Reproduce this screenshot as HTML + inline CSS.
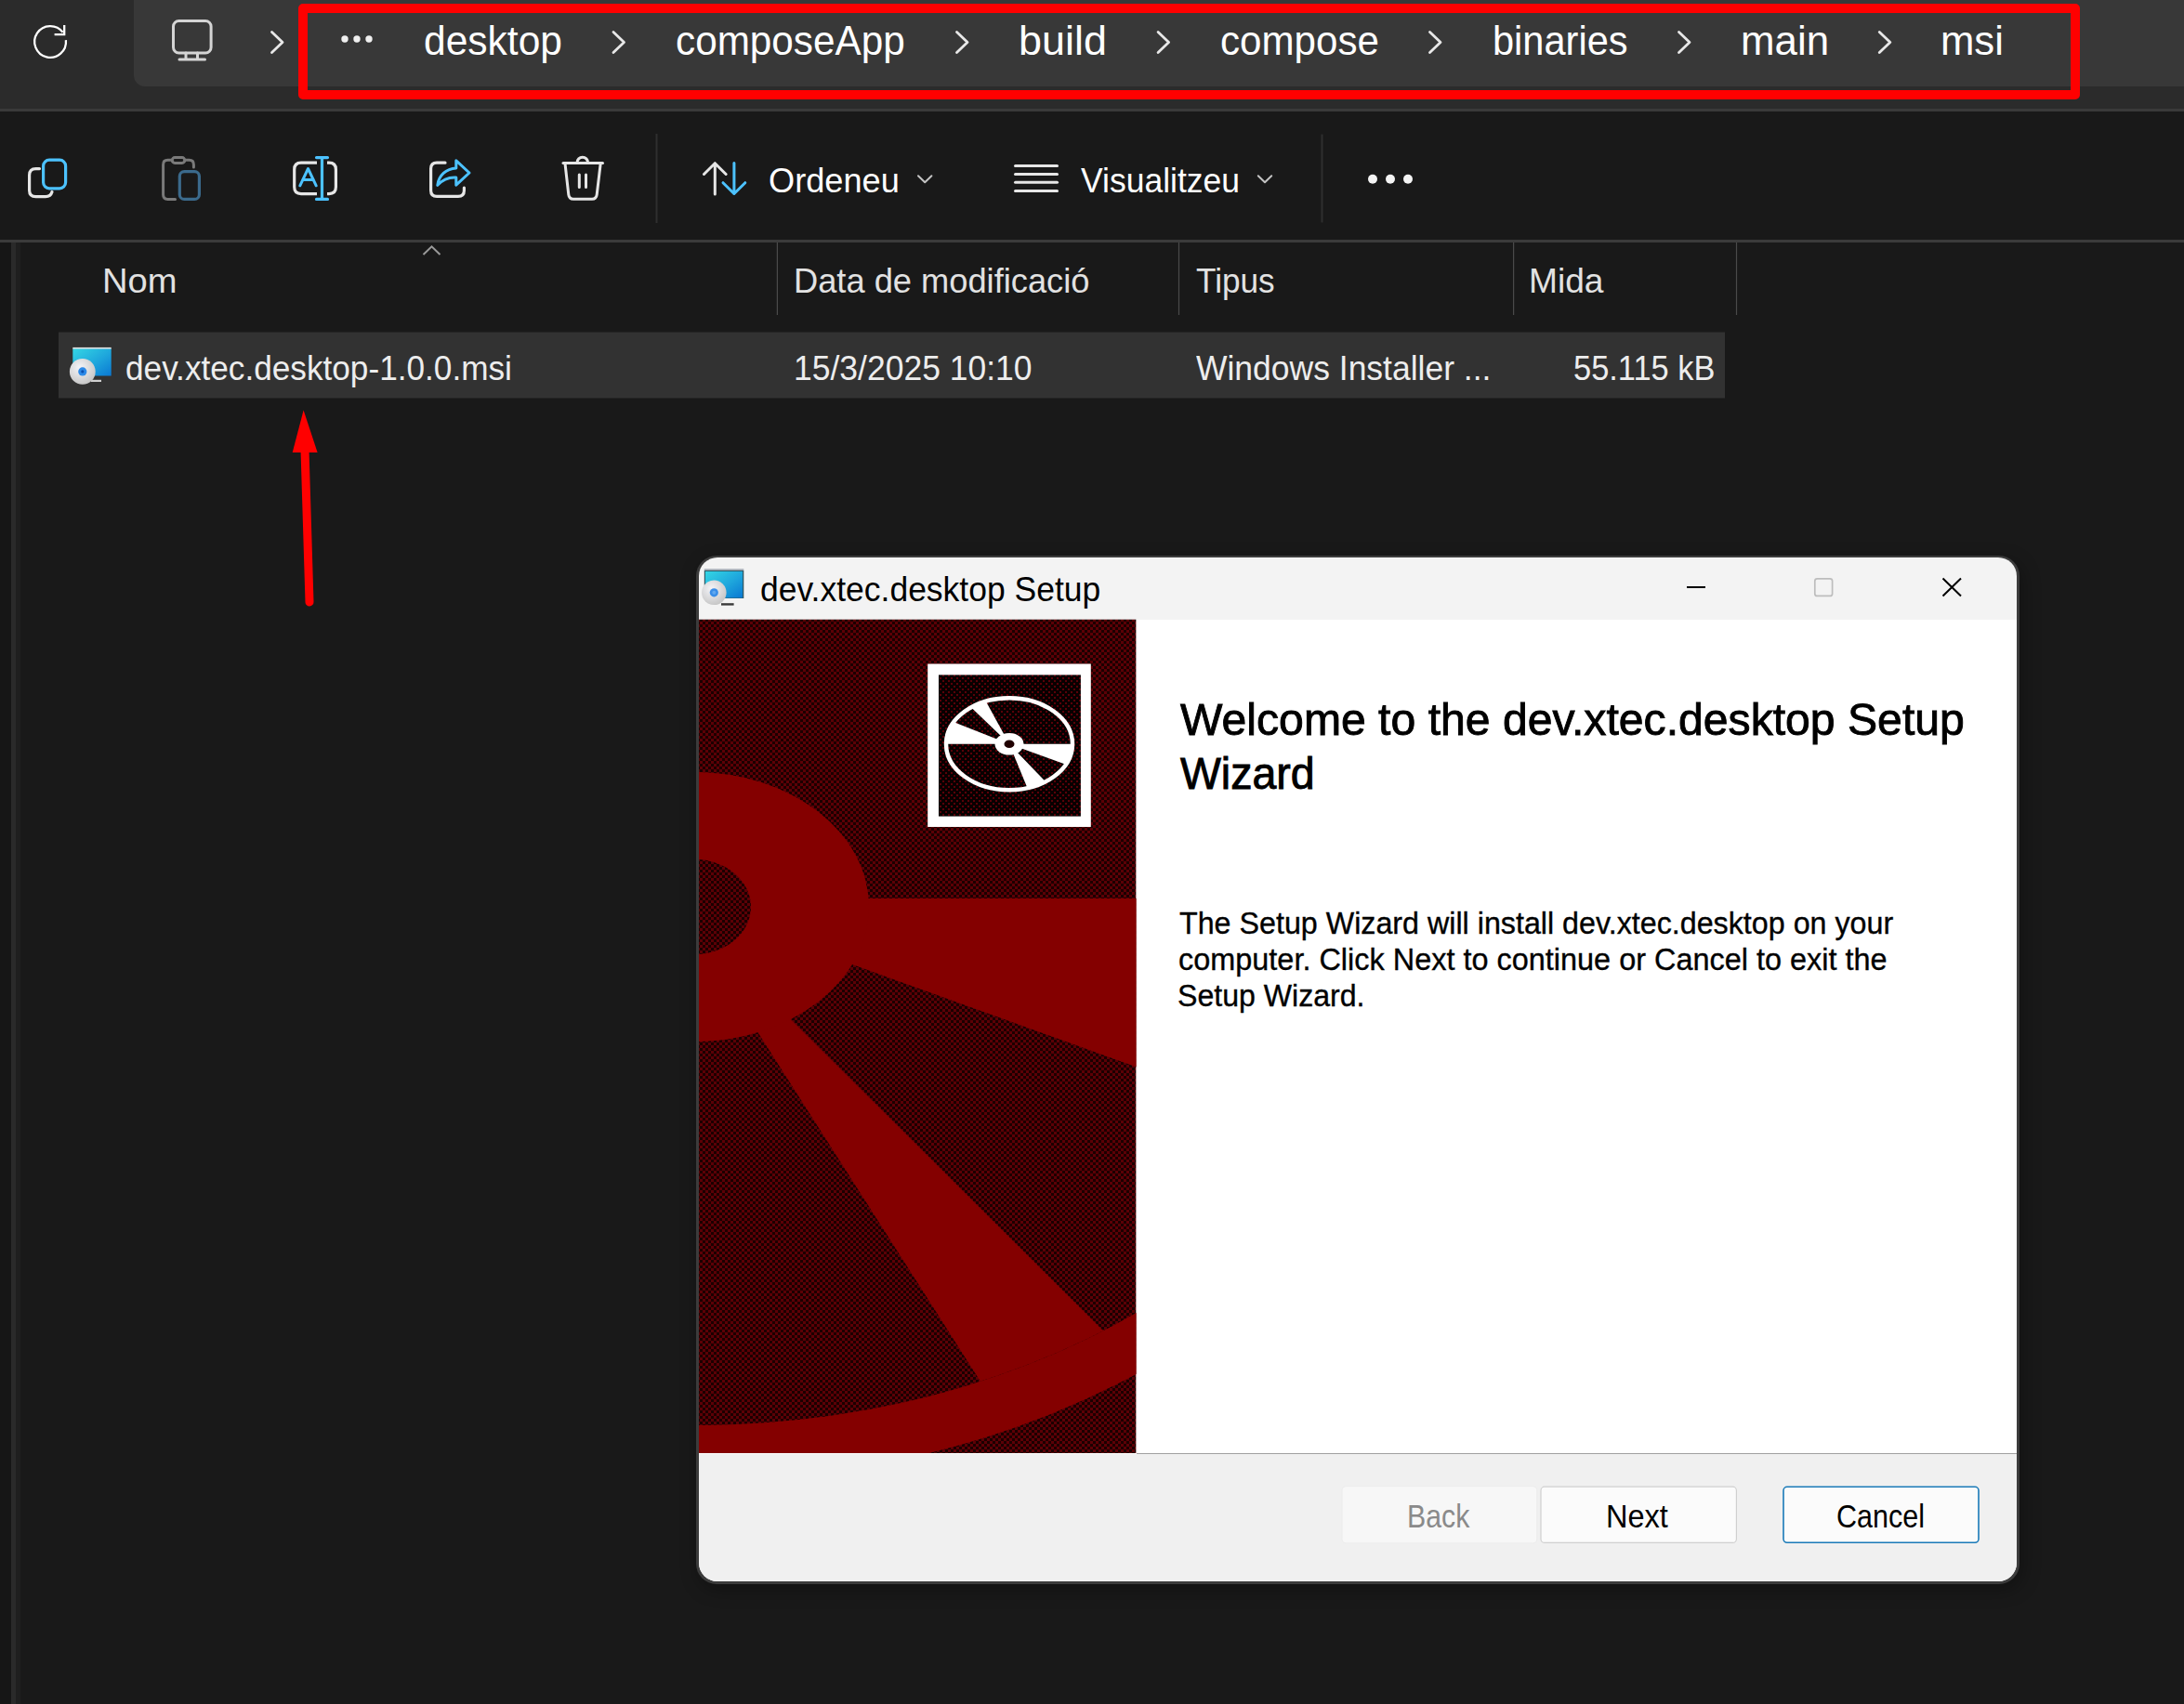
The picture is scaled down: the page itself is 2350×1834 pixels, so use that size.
<!DOCTYPE html>
<html><head><meta charset="utf-8"><style>
html,body{margin:0;padding:0}
body{width:2350px;height:1834px;position:relative;overflow:hidden;background:#191919;font-family:"Liberation Sans",sans-serif}
.t{position:absolute;white-space:pre;line-height:1;transform-origin:0 0}
</style></head><body>
<div style="position:absolute;left:0;top:0;width:2350px;height:117px;background:#2b2b2b"></div>
<div style="position:absolute;left:0;top:117px;width:2350px;height:3px;background:#3a3a3a"></div>
<div style="position:absolute;left:144px;top:-20px;width:2240px;height:112.5px;background:#383838;border-radius:12px"></div>
<div style="position:absolute;left:0;top:258px;width:2350px;height:3px;background:#3b3b3b"></div>
<div style="position:absolute;left:0;top:261px;width:12px;height:1573px;background:#161616"></div>
<div style="position:absolute;left:12px;top:261px;width:5px;height:1573px;background:#2a2a2a"></div>
<div style="position:absolute;left:17px;top:261px;width:5px;height:1573px;background:#1f1f1f"></div>
<div class="t" style="left:455.96px;top:22.78px;font-size:43.5px;color:#ffffff;transform:scaleX(0.9780);">desktop</div>

<div class="t" style="left:727.26px;top:22.78px;font-size:43.5px;color:#ffffff;transform:scaleX(0.9715);">composeApp</div>

<div class="t" style="left:1095.95px;top:22.78px;font-size:43.5px;color:#ffffff;transform:scaleX(1.0333);">build</div>

<div class="t" style="left:1312.76px;top:22.78px;font-size:43.5px;color:#ffffff;transform:scaleX(0.9682);">compose</div>

<div class="t" style="left:1605.65px;top:22.78px;font-size:43.5px;color:#ffffff;transform:scaleX(0.9554);">binaries</div>

<div class="t" style="left:1872.95px;top:22.78px;font-size:43.5px;color:#ffffff;transform:scaleX(1.0079);">main</div>

<div class="t" style="left:2087.95px;top:22.78px;font-size:43.5px;color:#ffffff;transform:scaleX(1.0037);">msi</div>

<svg width="2350" height="1834" style="position:absolute;left:0;top:0"><path d="M70.9,43.2 A16.9,16.9 0 1 1 67.6,34.8" fill="none" stroke="#fff" stroke-width="2.3"/>
<path d="M58.6,37.2 H69.2 V27" fill="none" stroke="#fff" stroke-width="2.3" stroke-linejoin="miter"/>
<rect x="186.5" y="22.5" width="40.6" height="34.5" rx="6" fill="none" stroke="#d4d4d4" stroke-width="3"/>
<path d="M200,57 V63.5 M212.5,57 V63.5 M193,64 H220.5" fill="none" stroke="#d4d4d4" stroke-width="3" stroke-linecap="round"/>
<path d="M292.5,34.5 L304,45.5 L292.5,56.5" fill="none" stroke="#e8e8e8" stroke-width="2.8" stroke-linecap="round" stroke-linejoin="round"/>
<path d="M660.0,34.5 L671.5,45.5 L660.0,56.5" fill="none" stroke="#e8e8e8" stroke-width="2.8" stroke-linecap="round" stroke-linejoin="round"/>
<path d="M1029.5,34.5 L1041,45.5 L1029.5,56.5" fill="none" stroke="#e8e8e8" stroke-width="2.8" stroke-linecap="round" stroke-linejoin="round"/>
<path d="M1246.1,34.5 L1257.6,45.5 L1246.1,56.5" fill="none" stroke="#e8e8e8" stroke-width="2.8" stroke-linecap="round" stroke-linejoin="round"/>
<path d="M1538.5,34.5 L1550,45.5 L1538.5,56.5" fill="none" stroke="#e8e8e8" stroke-width="2.8" stroke-linecap="round" stroke-linejoin="round"/>
<path d="M1806.5,34.5 L1818,45.5 L1806.5,56.5" fill="none" stroke="#e8e8e8" stroke-width="2.8" stroke-linecap="round" stroke-linejoin="round"/>
<path d="M2022.3,34.5 L2033.8,45.5 L2022.3,56.5" fill="none" stroke="#e8e8e8" stroke-width="2.8" stroke-linecap="round" stroke-linejoin="round"/>
<circle cx="371" cy="42" r="3.7" fill="#f0f0f0"/>
<circle cx="384" cy="42" r="3.7" fill="#f0f0f0"/>
<circle cx="397" cy="42" r="3.7" fill="#f0f0f0"/>
<rect x="326" y="9" width="1907" height="93" fill="none" stroke="#ff0000" stroke-width="10" stroke-linejoin="round"/>
<rect x="46.6" y="172.2" width="24" height="30.6" rx="6.5" fill="none" stroke="#4cc2ff" stroke-width="3.2"/>
<path d="M42.5,181.6 H38.5 Q31.6,181.6 31.6,188.5 V205 Q31.6,211.6 38.5,211.6 H49 Q54.5,211.6 56,206.5" fill="none" stroke="#e6e6e6" stroke-width="3.2" stroke-linecap="round"/>
<path d="M185,172.3 H180.5 Q175.6,172.3 175.6,177.2 V209.5 Q175.6,214.4 180.5,214.4 H188.5 M199,172.3 H203.5 Q208.4,172.3 208.4,177.2 V180" fill="none" stroke="#7a7a7a" stroke-width="3" stroke-linecap="round"/>
<rect x="185.2" y="169.6" width="13.6" height="5.8" rx="2.9" fill="none" stroke="#7a7a7a" stroke-width="3"/>
<rect x="193.3" y="184.6" width="21.1" height="29.8" rx="5" fill="none" stroke="#3b6a8c" stroke-width="3.2"/>
<path d="M341,175.2 H324 Q316.7,175.2 316.7,182.5 V201.3 Q316.7,208.6 324,208.6 H341 M352,175.2 H354 Q361.4,175.2 361.4,182.5 V201.3 Q361.4,208.6 354,208.6 H352" fill="none" stroke="#e6e6e6" stroke-width="3.2"/>
<path d="M346.5,169.6 V214.4 M340.5,169.6 H352.5 M340.5,214.4 H352.5" fill="none" stroke="#4cc2ff" stroke-width="3.2" stroke-linecap="round"/>
<path d="M322.8,199.8 L331.5,181.5 L340.2,199.8 M325.6,193.6 H337.4" fill="none" stroke="#4cc2ff" stroke-width="3" stroke-linecap="round" stroke-linejoin="round"/>
<path d="M479,175.2 H470 Q463.6,175.2 463.6,181.6 V205 Q463.6,211.4 470,211.4 H493 Q499.4,211.4 499.4,205 V202" fill="none" stroke="#e6e6e6" stroke-width="3.2" stroke-linecap="round"/>
<path d="M470.8,199.3 C472,189 480,181.5 490.8,181 V172.8 L505,186 L490.8,199.2 V191 C482.5,190.5 476,193.5 470.8,199.3 Z" fill="none" stroke="#4cc2ff" stroke-width="3" stroke-linejoin="round"/>
<path d="M606,175.4 H648.5" fill="none" stroke="#e6e6e6" stroke-width="3" stroke-linecap="round"/>
<path d="M621,175 A5.8,5.8 0 0 1 632.6,175" fill="none" stroke="#e6e6e6" stroke-width="3"/>
<path d="M608,176 L611.8,209.5 Q612.4,214.3 617,214.3 H637 Q641.6,214.3 642.2,209.5 L646.2,176" fill="none" stroke="#e6e6e6" stroke-width="3" stroke-linejoin="round"/>
<path d="M623.3,188 V201.5 M630.5,188 V201.5" fill="none" stroke="#e6e6e6" stroke-width="3" stroke-linecap="round"/>
<rect x="705.5" y="144" width="2" height="96" fill="#2f2f2f"/>
<rect x="1421.5" y="144.5" width="2" height="95" fill="#2f2f2f"/>
<path d="M769.3,176 V209 M757.5,187.5 L769.3,175.7 L781.1,187.5" fill="none" stroke="#e6e6e6" stroke-width="3" stroke-linecap="round" stroke-linejoin="round"/>
<path d="M789.9,175.5 V208.5 M778,196.7 L789.9,208.5 L801.8,196.7" fill="none" stroke="#4cc2ff" stroke-width="3" stroke-linecap="round" stroke-linejoin="round"/>
<path d="M988,189.2 L995.2,196.2 L1002.4,189.2" fill="none" stroke="#c4c4c4" stroke-width="2" stroke-linecap="round" stroke-linejoin="round"/>
<path d="M1092.5,178.5 H1137.5" stroke="#e6e6e6" stroke-width="3" stroke-linecap="round"/>
<path d="M1092.5,187.4 H1137.5" stroke="#e6e6e6" stroke-width="3" stroke-linecap="round"/>
<path d="M1092.5,196.3 H1137.5" stroke="#e6e6e6" stroke-width="3" stroke-linecap="round"/>
<path d="M1092.5,205.5 H1137.5" stroke="#e6e6e6" stroke-width="3" stroke-linecap="round"/>
<path d="M1353.8,189.2 L1361,196.2 L1368.2,189.2" fill="none" stroke="#c4c4c4" stroke-width="2" stroke-linecap="round" stroke-linejoin="round"/>
<circle cx="1477" cy="192.7" r="5" fill="#f4f4f4"/>
<circle cx="1496" cy="192.7" r="5" fill="#f4f4f4"/>
<circle cx="1515" cy="192.7" r="5" fill="#f4f4f4"/>
<path d="M455.5,274 L464.5,265.3 L473.5,274" fill="none" stroke="#9a9a9a" stroke-width="2"/>
<rect x="835.8" y="261" width="1.2" height="78" fill="#4a4a4a"/>
<rect x="1267.9" y="261" width="1.2" height="78" fill="#4a4a4a"/>
<rect x="1628.0" y="261" width="1.2" height="78" fill="#4a4a4a"/>
<rect x="1867.9" y="261" width="1.2" height="78" fill="#4a4a4a"/>
<rect x="63" y="357.5" width="1793" height="71" fill="#323232"/>
<defs><linearGradient id="scr" x1="0" y1="0" x2="1" y2="1"><stop offset="0" stop-color="#34d6e4"/><stop offset="0.55" stop-color="#1ea6dc"/><stop offset="1" stop-color="#0a78d2"/></linearGradient>
<radialGradient id="cdg" cx="0.4" cy="0.35" r="0.7"><stop offset="0" stop-color="#f4f4f8"/><stop offset="1" stop-color="#c4c4c4"/></radialGradient></defs>
<g transform="translate(75,373) scale(1.0)"><rect x="3.3" y="0.9" width="41.4" height="2" fill="#e8e8e8"/><rect x="3.3" y="2.5" width="41.4" height="29" fill="url(#scr)"/><rect x="23" y="35.8" width="11" height="2.2" fill="#d0d0d0"/><circle cx="13.8" cy="26.9" r="13.9" fill="url(#cdg)"/><circle cx="13.8" cy="26.9" r="4.6" fill="#2c8ae8"/><circle cx="13.8" cy="26.9" r="1.6" fill="#0a50b0"/></g>
<path d="M314.7,487 L326.6,441.6 L341.6,487 Z" fill="#ff0000"/>
<path d="M328,484 L333,648" stroke="#ff0000" stroke-width="9" stroke-linecap="round"/></svg>
<div class="t" style="left:110.34px;top:284.11px;font-size:37px;color:#e2e2e2;transform:scaleX(1.0301);">Nom</div>

<div class="t" style="left:854.04px;top:283.61px;font-size:37px;color:#e2e2e2;transform:scaleX(0.9800);">Data de modificació</div>

<div class="t" style="left:1286.66px;top:283.61px;font-size:37px;color:#e2e2e2;transform:scaleX(0.9500);">Tipus</div>

<div class="t" style="left:1645.44px;top:283.61px;font-size:37px;color:#e2e2e2;transform:scaleX(1.0035);">Mida</div>

<div class="t" style="left:134.52px;top:377.91px;font-size:37px;color:#ededed;transform:scaleX(0.9509);">dev.xtec.desktop-1.0.0.msi</div>

<div class="t" style="left:854.04px;top:377.91px;font-size:37px;color:#ededed;transform:scaleX(0.9591);">15/3/2025 10:10</div>

<div class="t" style="left:1287.03px;top:377.91px;font-size:37px;color:#ededed;transform:scaleX(0.9589);">Windows Installer ...</div>

<div class="t" style="left:1692.92px;top:377.91px;font-size:37px;color:#ededed;transform:scaleX(0.9298);">55.115 kB</div>

<div class="t" style="left:827.17px;top:176.62px;font-size:36.5px;color:#ffffff;transform:scaleX(0.9912);">Ordeneu</div>

<div class="t" style="left:1162.63px;top:176.62px;font-size:36.5px;color:#ffffff;transform:scaleX(0.9728);">Visualitzeu</div>

<div style="position:absolute;left:749px;top:597.5px;width:1424px;height:1107.5px;border-radius:22px;background:#3c3c3c;box-shadow:3px 6px 20px rgba(0,0,0,0.3)"></div>
<div style="position:absolute;left:752px;top:600px;width:1418px;height:1102px;border-radius:20px;background:#f3f3f3;overflow:hidden">
<div style="position:absolute;left:0;top:66.5px;width:1418px;height:898px;background:#fff"></div>
<div style="position:absolute;left:0;top:964px;width:1418px;height:138px;background:#f0f0f0;border-top:1px solid #fff"></div>
<div style="position:absolute;left:470.6px;top:964px;width:947px;height:1px;background:#a0a0a0"></div>
</div>
<svg width="2350" height="1834" style="position:absolute;left:0;top:0"><defs>
<pattern id="dith" width="6" height="6" patternUnits="userSpaceOnUse"><rect width="6" height="6" fill="#1c0000"/><rect x="0" y="0" width="3" height="3" fill="#5c0006"/><rect x="3" y="3" width="3" height="3" fill="#5c0006"/></pattern>
<pattern id="dith2" width="6" height="6" patternUnits="userSpaceOnUse"><rect width="6" height="6" fill="#080000"/><rect x="0" y="0" width="2" height="2" fill="#5a0008"/><rect x="3" y="3" width="2" height="2" fill="#5a0008"/></pattern>
<clipPath id="imgclip"><rect x="752" y="666.5" width="470.6" height="897.5"/></clipPath>
<clipPath id="ringclip"><ellipse cx="748" cy="976" rx="763" ry="558"/></clipPath>
<linearGradient id="scr2" x1="0" y1="0" x2="1" y2="1"><stop offset="0" stop-color="#34d6e4"/><stop offset="0.55" stop-color="#1ea6dc"/><stop offset="1" stop-color="#0a78d2"/></linearGradient>
</defs>
<g clip-path="url(#imgclip)">
<rect x="752" y="666.5" width="470.6" height="897.5" fill="url(#dith)"/>
<path d="M748,976 m-817,0 a817,618 0 1 0 1634,0 a817,618 0 1 0 -1634,0 Z M748,976 m-763,0 a763,558 0 1 0 1526,0 a763,558 0 1 0 -1526,0 Z" fill="#840000" fill-rule="evenodd"/>
<g clip-path="url(#ringclip)">
<polygon points="748,967 1240,967 1240,1154.6 748,977" fill="#840000"/>
<polygon points="730,977 1190.8,1700 1455.9,1700" fill="#840000"/>
</g>
<ellipse cx="748" cy="976" rx="187" ry="145" fill="#840000"/>
<ellipse cx="748" cy="976" rx="60" ry="51" fill="url(#dith)"/>
<rect x="998.2" y="714.5" width="175.6" height="175.5" fill="#ffffff"/>
<rect x="1010" y="726.4" width="152.9" height="152.2" fill="url(#dith2)"/>
<ellipse cx="1086" cy="800.8" rx="68" ry="49.5" fill="none" stroke="#fff" stroke-width="4.5"/>
<clipPath id="cdc"><ellipse cx="1086" cy="800.8" rx="69" ry="50.5"/></clipPath>
<g clip-path="url(#cdc)" fill="#fff">
<polygon points="1086,800.8 1025.0400000000002,742.2400000000001 1048.8799999999999,732.96"/>
<polygon points="1086,800.8 997.5200000000001,765.9200000000001 981.04,800.8"/>
<polygon points="1086,800.8 1177.0400000000002,833.76 1195.44,800.8"/>
<polygon points="1086,800.8 1109.36,857.5999999999999 1147.7599999999998,864.96"/>
</g>
<ellipse cx="1086" cy="800.8" rx="15.5" ry="11.8" fill="#fff"/>
<ellipse cx="1086" cy="800.8" rx="5.5" ry="4.3" fill="#200000"/>
</g>
<g transform="translate(755,612)"><rect x="2.8" y="0.2" width="42.5" height="2" fill="#a8b0b8"/><rect x="2.8" y="2" width="42.5" height="30" fill="#2f5a66"/><rect x="4" y="3" width="40" height="28.5" fill="url(#scr2)"/><rect x="21" y="37.2" width="13.6" height="2.4" fill="#3a3a3a"/><circle cx="13.3" cy="25.8" r="13.3" fill="url(#cdg)"/><circle cx="13.3" cy="25.8" r="4.6" fill="#3a8ee8"/><circle cx="13.3" cy="25.8" r="2" fill="#60a8f0"/></g>
<path d="M1815,632 H1835" stroke="#000" stroke-width="2"/>
<rect x="1952.8" y="622.8" width="18.8" height="18.6" rx="2.5" fill="none" stroke="#bdbdbd" stroke-width="1.7"/>
<path d="M2090.5,622.5 L2110,641.5 M2110,622.5 L2090.5,641.5" stroke="#000" stroke-width="2"/>
<rect x="1444" y="1599.7" width="209.8" height="61.2" rx="4" fill="#f7f7f7" stroke="#ececec" stroke-width="1"/>
<rect x="1658" y="1600.2" width="210.4" height="60.2" rx="4" fill="#fbfbfb" stroke="#d0d0d0" stroke-width="1.2"/>
<rect x="1919" y="1600.3" width="210" height="60" rx="4" fill="#fbfbfb" stroke="#1a7ab8" stroke-width="1.6"/></svg>
<div class="t" style="left:817.86px;top:616.74px;font-size:36px;color:#000000;transform:scaleX(0.9858);">dev.xtec.desktop Setup</div>

<div class="t" style="left:1269.62px;top:751.02px;font-size:48px;color:#000000;transform:scaleX(1.0029);-webkit-text-stroke:0.9px #000;">Welcome to the dev.xtec.desktop Setup</div>

<div class="t" style="left:1269.52px;top:809.12px;font-size:48px;color:#000000;transform:scaleX(0.9683);-webkit-text-stroke:0.9px #000;">Wizard</div>

<div class="t" style="left:1268.64px;top:977.35px;font-size:33px;color:#000000;transform:scaleX(0.9770);-webkit-text-stroke:0.35px #000;">The Setup Wizard will install dev.xtec.desktop on your</div>

<div class="t" style="left:1267.68px;top:1016.25px;font-size:33px;color:#000000;transform:scaleX(0.9829);-webkit-text-stroke:0.35px #000;">computer. Click Next to continue or Cancel to exit the</div>

<div class="t" style="left:1267.35px;top:1055.04px;font-size:33px;color:#000000;transform:scaleX(0.9723);-webkit-text-stroke:0.35px #000;">Setup Wizard.</div>

<div class="t" style="left:1513.74px;top:1614.89px;font-size:34.5px;color:#8a8a8a;transform:scaleX(0.8777);">Back</div>

<div class="t" style="left:1728.04px;top:1614.89px;font-size:34.5px;color:#000000;transform:scaleX(0.9431);">Next</div>

<div class="t" style="left:1975.98px;top:1614.89px;font-size:34.5px;color:#000000;transform:scaleX(0.8841);">Cancel</div>

</body></html>
